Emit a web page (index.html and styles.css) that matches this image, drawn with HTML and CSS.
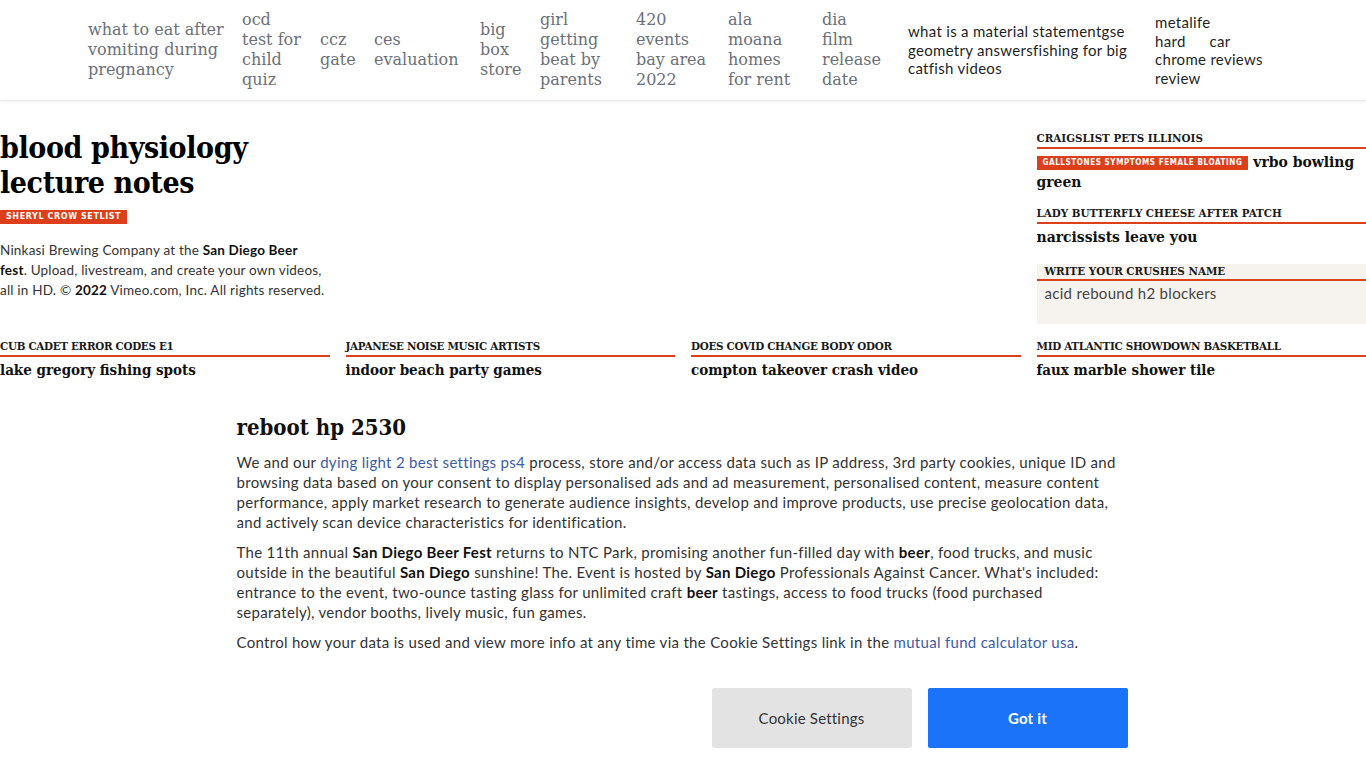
FILE: index.html
```html
<!DOCTYPE html>
<html lang="en">

<head>
    <meta charset="UTF-8">
    <meta name="viewport" content="width=device-width, initial-scale=1.0">
    <title>blood physiology lecture notes</title>
    <link rel="stylesheet" href="styles.css">
</head>

<body>
    <header class="site-header">
        <nav class="topnav">
            <a class="topnav-link" href="#">what to eat after<br>vomiting during<br>pregnancy</a>
            <a class="topnav-link" href="#">ocd<br>test for<br>child<br>quiz</a>
            <a class="topnav-link" href="#">ccz<br>gate</a>
            <a class="topnav-link" href="#">ces<br>evaluation</a>
            <a class="topnav-link" href="#">big<br>box<br>store</a>
            <a class="topnav-link" href="#">girl<br>getting<br>beat by<br>parents</a>
            <a class="topnav-link" href="#">420<br>events<br>bay area<br>2022</a>
            <a class="topnav-link" href="#">ala<br>moana<br>homes<br>for rent</a>
            <a class="topnav-link" href="#">dia<br>film<br>release<br>date</a>
            <a class="topnav-link topnav-link--sans" href="#">what is a material statementgse geometry answersfishing for big catfish videos</a>
            <a class="topnav-link topnav-link--sans topnav-link--split" href="#">metalife<br>hard<span class="gap"></span>car<br>chrome reviews<br>review</a>
        </nav>
    </header>

    <main class="page">
        <section class="lead">
            <article class="lead-story">
                <h1 class="lead-title">blood physiology lecture notes</h1>
                <span class="tag">sheryl crow setlist</span>
                <p class="lead-text">Ninkasi Brewing Company at the <b>San Diego Beer fest</b>. Upload, livestream, and create your own videos, all in HD. © <b>2022</b> Vimeo.com, Inc. All rights reserved.</p>
            </article>

            <aside class="sidebar">
                <div class="side-item">
                    <h3 class="kicker">craigslist pets illinois</h3>
                    <p class="side-title"><span class="tag">gallstones symptoms female bloating</span> vrbo bowling green</p>
                </div>
                <div class="side-item">
                    <h3 class="kicker">lady butterfly cheese after patch</h3>
                    <p class="side-title">narcissists leave you</p>
                </div>
                <div class="side-box">
                    <h3 class="kicker kicker--boxed">write your crushes name</h3>
                    <p class="side-box-text">acid rebound h2 blockers</p>
                </div>
            </aside>
        </section>

        <section class="cards">
            <div class="card">
                <h3 class="kicker kicker--narrow">cub cadet error codes e1</h3>
                <p class="card-title">lake gregory fishing spots</p>
            </div>
            <div class="card">
                <h3 class="kicker kicker--narrow">japanese noise music artists</h3>
                <p class="card-title">indoor beach party games</p>
            </div>
            <div class="card">
                <h3 class="kicker kicker--narrow">does covid change body odor</h3>
                <p class="card-title">compton takeover crash video</p>
            </div>
            <div class="card">
                <h3 class="kicker kicker--narrow">mid atlantic showdown basketball</h3>
                <p class="card-title">faux marble shower tile</p>
            </div>
        </section>

        <section class="consent">
            <h2 class="consent-title">reboot hp 2530</h2>
            <p>We and our <a href="#">dying light 2 best settings ps4</a> process, store and/or access data such as IP address, 3rd party cookies, unique ID and browsing data based on your consent to display personalised ads and ad measurement, personalised content, measure content performance, apply market research to generate audience insights, develop and improve products, use precise geolocation data, and actively scan device characteristics for identification.</p>
            <p>The 11th annual <b>San Diego Beer Fest</b> returns to NTC Park, promising another fun-filled day with <b>beer</b>, food trucks, and music outside in the beautiful <b>San Diego</b> sunshine! The. Event is hosted by <b>San Diego</b> Professionals Against Cancer. What's included: entrance to the event, two-ounce tasting glass for unlimited craft <b>beer</b> tastings, access to food trucks (food purchased separately), vendor booths, lively music, fun games.</p>
            <p>Control how your data is used and view more info at any time via the Cookie Settings link in the <a href="#">mutual fund calculator usa</a>.</p>
            <div class="consent-actions">
                <button class="btn btn--light" type="button">Cookie Settings</button>
                <button class="btn btn--primary" type="button">Got it</button>
            </div>
        </section>
    </main>
</body>

</html>
```

FILE: styles.css
```css
/* General Styles */
body {
    margin: 0;
    background: #fff;
    color: #1a1a1a;
    font-family: Lato, "Open Sans", sans-serif;
}

a {
    text-decoration: none;
}

/* Header */
.site-header {
    height: 100px;
    display: flex;
    align-items: center;
    box-shadow: 0 1px 3px rgba(0, 0, 0, 0.12);
}

.topnav {
    display: grid;
    grid-template-columns: 134px 58px 34px 86px 40px 76px 72px 74px 66px 227px 130px;
    column-gap: 20px;
    align-items: center;
    padding-left: 88px;
}

.topnav-link {
    font-family: "DejaVu Serif", serif;
    font-size: 16px;
    line-height: 20px;
    color: #6b7078;
    white-space: nowrap;
}

.topnav-link--sans {
    font-family: Lato, sans-serif;
    font-size: 15px;
    line-height: 18.5px;
    letter-spacing: 0.3px;
    color: #1f1f1f;
    white-space: normal;
}

.topnav-link--split .gap {
    display: inline-block;
    width: 24px;
}

/* Lead area */
.page {
    padding-top: 30px;
}

.lead {
    display: grid;
    grid-template-columns: repeat(4, 1fr);
    column-gap: 16px;
}

.lead-story {
    grid-column: 1;
}

.lead-title {
    margin: 0;
    font-family: "DejaVu Serif", serif;
    font-stretch: condensed;
    font-size: 30px;
    line-height: 35px;
    font-weight: 800;
    letter-spacing: -0.4px;
    color: #000;
}

.tag {
    display: inline-block;
    background: #dc3f1a;
    color: #fff;
    font-family: "DejaVu Sans", sans-serif;
    font-size: 8px;
    font-weight: bold;
    letter-spacing: 0.6px;
    line-height: 14px;
    padding: 0 6px;
    text-transform: uppercase;
    vertical-align: middle;
}

.lead-story .tag {
    margin-top: 10px;
}

.lead-text {
    margin: 16px 0 0;
    font-size: 13.5px;
    line-height: 20px;
    letter-spacing: 0.2px;
    color: #333;
    max-width: 325px;
}

.lead-text b {
    color: #111;
}

/* Sidebar */
.sidebar {
    grid-column: 4;
}

.side-item {
    margin-bottom: 13px;
}

.kicker {
    margin: 0;
    font-family: "DejaVu Serif", serif;
    font-stretch: condensed;
    font-size: 11.5px;
    line-height: 16px;
    font-weight: bold;
    text-transform: uppercase;
    color: #1a1a1a;
    border-bottom: 2px solid #dc3f1a;
    padding-bottom: 1px;
}

.kicker--narrow {
    letter-spacing: -0.3px;
}

.kicker--boxed {
    padding-left: 8px;
    line-height: 14px;
}

.side-title {
    margin: 3px 0 0;
    font-family: "DejaVu Serif", serif;
    font-stretch: condensed;
    font-size: 15.5px;
    line-height: 20px;
    font-weight: 600;
    color: #111;
}

.side-title .tag {
    vertical-align: 2px;
}

.side-box {
    background: #f6f3ee;
    height: 60px;
    margin-top: 17px;
}

.side-box-text {
    margin: 2px 0 0;
    padding-left: 8px;
    font-size: 15px;
    line-height: 20px;
    letter-spacing: 0.3px;
    color: #444;
}

/* Card row */
.cards {
    display: grid;
    grid-template-columns: repeat(4, 1fr);
    column-gap: 16px;
    margin-top: 14px;
}

.card-title {
    margin: 3px 0 0;
    font-family: "DejaVu Serif", serif;
    font-stretch: condensed;
    font-size: 15px;
    line-height: 20px;
    font-weight: 600;
    color: #111;
}

/* Consent block */
.consent {
    max-width: 893px;
    margin: 34px auto 0;
    font-size: 15px;
    line-height: 20px;
    letter-spacing: 0.3px;
    color: #333;
}

.consent-title {
    margin: 0 0 12px;
    font-family: "DejaVu Serif", serif;
    font-stretch: condensed;
    font-size: 22px;
    line-height: 26px;
    font-weight: bold;
    letter-spacing: 0;
    color: #111;
}

.consent p {
    margin: 0 0 10px;
    max-width: 886px;
}

.consent b {
    color: #111;
}

.consent a {
    color: #3b5ca6;
}

.consent-actions {
    display: flex;
    justify-content: flex-end;
    gap: 16px;
    margin-top: 36px;
    padding-right: 2px;
}

/* Button Styles */
.btn {
    width: 200px;
    height: 60px;
    border: none;
    border-radius: 2px;
    font-family: Lato, sans-serif;
    font-size: 15px;
    letter-spacing: 0.2px;
    cursor: pointer;
}

.btn--light {
    background: #e3e3e3;
    color: #333;
}

.btn--primary {
    background: #1a73f8;
    color: #fff;
    font-weight: bold;
}
```
